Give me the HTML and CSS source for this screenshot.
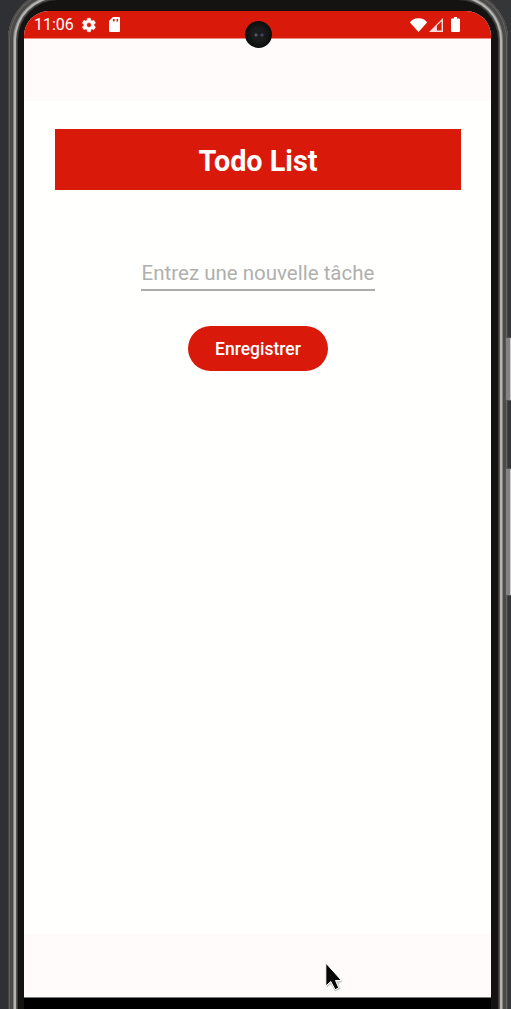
FILE: index.html
```html
<!DOCTYPE html>
<html lang="fr">
<head>
<meta charset="utf-8">
<title>Todo List</title>
<link rel="stylesheet" href="styles.css">
</head>
<body>
<div class="device">
  <i class="side-key power"></i>
  <i class="side-key volume"></i>
  <div class="screen">
    <header class="status">
      <span class="clock">11:06</span>
      <svg class="gear" width="16" height="16" viewBox="0 0 24 24"><path fill="#fff" stroke="#fff" stroke-width=".8" fill-rule="evenodd" d="M19.4 13a7.500 7.500 0 0 0 0-2l2.100-1.600a.5.5 0 0 0 .1-.7l-2-3.400a.5.5 0 0 0-.6-.2l-2.500 1a7 7 0 0 0-1.700-1L14.400 2.400a.5.5 0 0 0-.5-.4h-4a.5.5 0 0 0-.5.4L9 5.100a7 7 0 0 0-1.700 1l-2.500-1a.5.5 0 0 0-.6.2l-2 3.400a.5.5 0 0 0 .1.7L4.500 11a7.500 7.500 0 0 0 0 2l-2.200 1.600a.5.5 0 0 0-.1.700l2 3.400a.5.5 0 0 0 .6.2l2.500-1a7 7 0 0 0 1.700 1l.4 2.700a.5.5 0 0 0 .5.400h4a.5.5 0 0 0 .5-.4l.4-2.700a7 7 0 0 0 1.700-1l2.500 1a.5.5 0 0 0 .6-.2l2-3.400a.5.5 0 0 0-.1-.7zM12 15.600a3.600 3.600 0 1 1 0-7.200 3.600 3.600 0 0 1 0 7.200z"/></svg>
      <svg class="card" width="11" height="15" viewBox="0 0 11 15"><path fill="#fff" fill-rule="evenodd" d="M4 0h6q1 0 1 1v13q0 1-1 1H1q-1 0-1-1V4zM4 2v2.500h1.600V2zM7.500 2v2.500h1.600V2z"/></svg>
      <svg class="wifi" width="17" height="14" viewBox="0 0 17 14"><path fill="#fff" d="M0 4.500Q.5 3 3 1.500Q8.500-1 14 1.500Q16.500 3 17 4.500L8.500 14z"/></svg>
      <svg class="signal" width="14" height="14" viewBox="0 0 15 15"><path fill="#fff" opacity=".85" fill-rule="evenodd" d="M0 15 15 0v15zM8.500 8.300V13.500H13.500V3.400z"/></svg>
      <svg class="battery" width="9" height="15" viewBox="0 0 9 15"><path fill="#fff" d="M3 0h3v1.500h2q1 0 1 1V14q0 1-1 1H1q-1 0-1-1V2.500q0-1 1-1h2z"/></svg>
      <i class="camera"></i>
    </header>
    <div class="top-inset"></div>
    <main class="content">
      <h1 class="title">Todo List</h1>
      <div class="field">Entrez une nouvelle tâche</div>
      <button class="save">Enregistrer</button>
    </main>
    <div class="bottom-inset">
      <svg class="cursor" width="20" height="30" viewBox="0 0 20 30"><path fill="#8886" stroke="#8884" d="M2 3v21l4-3 4 7 5-2-2-5 4-3z"/><path fill="#080808" stroke="#fff" stroke-width="1" d="M.8 0v23l5-4.500 4.300 8.200 3.700-1.800L10.500 17.500h6z"/></svg>
    </div>
    <div class="chin"></div>
  </div>
</div>
</body>
</html>
```
FILE: styles.css
```css
* { box-sizing: border-box; }
body {
  display: flow-root;
  margin: 0;
  height: 1009px;
  overflow: hidden;
  background: linear-gradient(90deg, #2e3033 0 50%, #353637 50%);
  font-family: Roboto, sans-serif;
}
.device {
  position: relative;
  width: 500px;
  height: 1019px;
  margin: -10px 0 0 8px;
  padding: 21px 17px 0 16px;
  border-radius: 50px 50px 0 0;
  background: #141311;
  --rim:
    inset 0 0 0 1px #444443,
    inset 0 0 0 2px #656461,
    inset 0 0 0 5px #4b4a48,
    inset 0 0 0 6px #83827f,
    inset 0 0 0 8px #b5b5b3,
    inset 0 0 0 9px #535351,
    inset 0 0 0 10px #3c3b39;
}
/* Metal rim: concentric rings, open at the bottom */
.device::before {
  content: "";
  position: absolute;
  inset: 0;
  border-radius: inherit;
  box-shadow: var(--rim);
  clip-path: inset(0 0 10px);
}
.device::after {
  content: "";
  position: absolute;
  inset: auto 0 0;
  height: 10px;
  background: linear-gradient(90deg,
    #444443 0 1px, #656461 1px 2px, #4b4a48 2px 5px, #83827f 5px 6px, #b5b5b3 6px 8px, #535351 8px 9px, #3c3b39 9px 10px,
    transparent 10px 490px,
    #3c3b39 490px 491px, #535351 491px 492px, #b5b5b3 492px 494px, #83827f 494px 495px, #4b4a48 495px 498px, #656461 498px 499px, #444443 499px);
}
.side-key {
  position: absolute;
  left: 497px;
  width: 6px;
  border: 1px solid #555;
  border-right-color: #ccc;
  border-radius: 0 2px 2px 0;
  background: #838383;
}
.power { top: 347px; height: 64px; }
.volume { top: 478px; height: 128px; }
.screen {
  display: flex;
  flex-direction: column;
  height: 998px;
  border-radius: 25px 25px 0 0;
  overflow: hidden;
  background: #fffffe;
}
.status {
  position: relative;
  z-index: 1;
  display: flex;
  flex: none;
  align-items: center;
  height: 28px;
  padding: 0 31px 0 10px;
  background: #d91a0b;
  border-bottom: 1px solid #ec8d85;
}
.clock { width: 47px; font-size: 16px; line-height: 28px; color: #fff; white-space: nowrap; }
.card { margin-left: 12px; }
.wifi { margin-left: auto; }
.signal { margin-left: 2px; }
.battery { margin-left: 8px; }
.camera {
  position: absolute;
  left: 221px;
  top: 10px;
  width: 27px;
  height: 27px;
  border-radius: 50%;
  background:
    radial-gradient(circle at 11px 14px, #526062 0 1px, transparent 2px),
    radial-gradient(circle at 17px 14px, #424570 0 1px, transparent 2px),
    radial-gradient(circle, #1c1c1c 30%, #0e1010 65%);
}
.top-inset { flex: none; height: 62px; background: #fffbfb; }
.content {
  display: flex;
  flex: none;
  flex-direction: column;
  align-items: center;
  height: 833px;
  padding: 28px 30px 0 31px;
}
.title {
  align-self: stretch;
  height: 61px;
  margin: 0;
  background: #d91a0b;
  color: #fff;
  font-size: 28.8px;
  font-weight: 700;
  line-height: 65px;
  text-align: center;
}
.field {
  width: 234px;
  height: 41px;
  margin-top: 60px;
  border-bottom: 2px solid #acacac;
  color: #b0b0ae;
  font-size: 20.5px;
  line-height: 46px;
  text-align: center;
  white-space: nowrap;
}
.save {
  width: 140px;
  height: 45px;
  margin-top: 35px;
  padding: 0;
  border: 0;
  border-radius: 23px;
  background: #d91a0b;
  color: #fff;
  font: 500 17.500px/46px Roboto, sans-serif;
}
.bottom-inset { position: relative; flex: none; height: 64px; background: #fffbfb; border-bottom: 1px solid #777; }
.cursor { position: absolute; left: 301px; top: 29px; }
.chin { flex: 1; background: #000; }
```
